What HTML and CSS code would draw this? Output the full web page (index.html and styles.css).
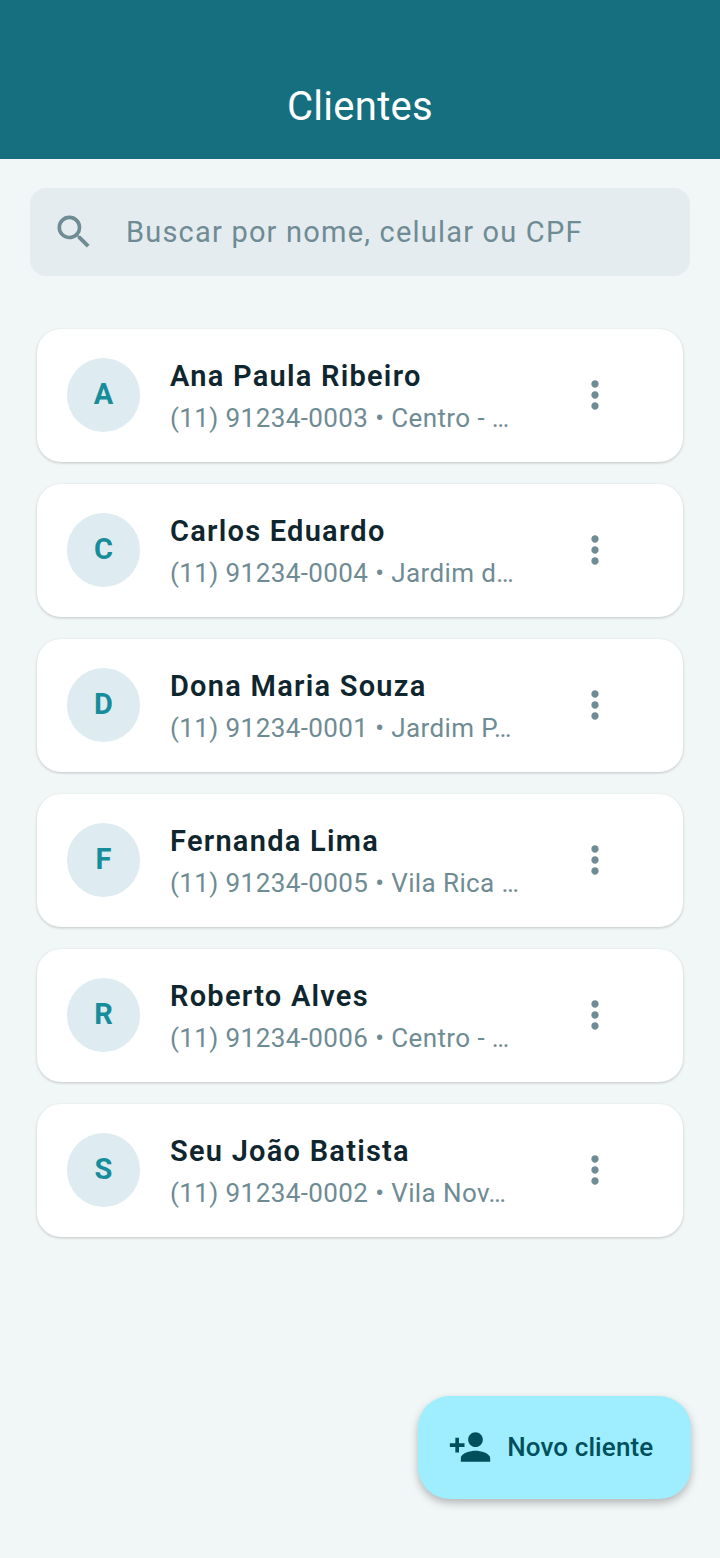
FILE: index.html
```html
<!DOCTYPE html>
<html lang="pt-BR">
<head>
    <meta charset="UTF-8">
    <meta name="viewport" content="width=device-width, initial-scale=1.0">
    <title>Clientes</title>
    <link rel="stylesheet" href="styles.css">
</head>
<body>
    <header class="app-bar">
        <h1 class="app-title">Clientes</h1>
    </header>

    <div class="search-box">
        <svg class="search-icon" viewBox="0 0 24 24"><path d="M15.5 14h-.79l-.28-.27A6.471 6.471 0 0 0 16 9.5 6.5 6.5 0 1 0 9.5 16c1.61 0 3.09-.59 4.23-1.57l.27.28v.79l5 4.99L20.49 19l-4.99-5zm-6 0C7.01 14 5 11.99 5 9.5S7.01 5 9.5 5 14 7.01 14 9.5 11.99 14 9.5 14z"/></svg>
        <span class="search-placeholder">Buscar por nome, celular ou CPF</span>
    </div>

    <main class="client-list">
        <div class="client-card">
            <div class="avatar">A</div>
            <div class="client-info">
                <div class="client-name">Ana Paula Ribeiro</div>
                <div class="client-sub">(11) 91234-0003 • Centro - …</div>
            </div>
            <svg class="more-icon" viewBox="0 0 24 24"><path d="M12 8c1.1 0 2-.9 2-2s-.9-2-2-2-2 .9-2 2 .9 2 2 2zm0 2c-1.1 0-2 .9-2 2s.9 2 2 2 2-.9 2-2-.9-2-2-2zm0 6c-1.1 0-2 .9-2 2s.9 2 2 2 2-.9 2-2-.9-2-2-2z"/></svg>
        </div>
        <div class="client-card">
            <div class="avatar">C</div>
            <div class="client-info">
                <div class="client-name">Carlos Eduardo</div>
                <div class="client-sub">(11) 91234-0004 • Jardim d…</div>
            </div>
            <svg class="more-icon" viewBox="0 0 24 24"><path d="M12 8c1.1 0 2-.9 2-2s-.9-2-2-2-2 .9-2 2 .9 2 2 2zm0 2c-1.1 0-2 .9-2 2s.9 2 2 2 2-.9 2-2-.9-2-2-2zm0 6c-1.1 0-2 .9-2 2s.9 2 2 2 2-.9 2-2-.9-2-2-2z"/></svg>
        </div>
        <div class="client-card">
            <div class="avatar">D</div>
            <div class="client-info">
                <div class="client-name">Dona Maria Souza</div>
                <div class="client-sub">(11) 91234-0001 • Jardim P…</div>
            </div>
            <svg class="more-icon" viewBox="0 0 24 24"><path d="M12 8c1.1 0 2-.9 2-2s-.9-2-2-2-2 .9-2 2 .9 2 2 2zm0 2c-1.1 0-2 .9-2 2s.9 2 2 2 2-.9 2-2-.9-2-2-2zm0 6c-1.1 0-2 .9-2 2s.9 2 2 2 2-.9 2-2-.9-2-2-2z"/></svg>
        </div>
        <div class="client-card">
            <div class="avatar">F</div>
            <div class="client-info">
                <div class="client-name">Fernanda Lima</div>
                <div class="client-sub">(11) 91234-0005 • Vila Rica …</div>
            </div>
            <svg class="more-icon" viewBox="0 0 24 24"><path d="M12 8c1.1 0 2-.9 2-2s-.9-2-2-2-2 .9-2 2 .9 2 2 2zm0 2c-1.1 0-2 .9-2 2s.9 2 2 2 2-.9 2-2-.9-2-2-2zm0 6c-1.1 0-2 .9-2 2s.9 2 2 2 2-.9 2-2-.9-2-2-2z"/></svg>
        </div>
        <div class="client-card">
            <div class="avatar">R</div>
            <div class="client-info">
                <div class="client-name">Roberto Alves</div>
                <div class="client-sub">(11) 91234-0006 • Centro - …</div>
            </div>
            <svg class="more-icon" viewBox="0 0 24 24"><path d="M12 8c1.1 0 2-.9 2-2s-.9-2-2-2-2 .9-2 2 .9 2 2 2zm0 2c-1.1 0-2 .9-2 2s.9 2 2 2 2-.9 2-2-.9-2-2-2zm0 6c-1.1 0-2 .9-2 2s.9 2 2 2 2-.9 2-2-.9-2-2-2z"/></svg>
        </div>
        <div class="client-card">
            <div class="avatar">S</div>
            <div class="client-info">
                <div class="client-name">Seu João Batista</div>
                <div class="client-sub">(11) 91234-0002 • Vila Nov…</div>
            </div>
            <svg class="more-icon" viewBox="0 0 24 24"><path d="M12 8c1.1 0 2-.9 2-2s-.9-2-2-2-2 .9-2 2 .9 2 2 2zm0 2c-1.1 0-2 .9-2 2s.9 2 2 2 2-.9 2-2-.9-2-2-2zm0 6c-1.1 0-2 .9-2 2s.9 2 2 2 2-.9 2-2-.9-2-2-2z"/></svg>
        </div>
    </main>

    <button class="fab">
        <svg class="fab-icon" viewBox="0 0 24 24"><path d="M15 12c2.21 0 4-1.79 4-4s-1.79-4-4-4-4 1.79-4 4 1.79 4 4 4zm-9-2V7H4v3H1v2h3v3h2v-3h3v-2H6zm9 4c-2.67 0-8 1.34-8 4v2h16v-2c0-2.66-5.33-4-8-4z"/></svg>
        Novo cliente
    </button>
</body>
</html>
```

FILE: styles.css
```css
body {
    margin: 0;
    min-height: 1558px;
    background-color: #f1f6f7;
    font-family: Roboto, Arial, sans-serif;
    box-sizing: border-box;
}
.app-bar {
    height: 159px;
    background-color: #166f7f;
    display: flex;
    justify-content: center;
    align-items: flex-end;
    padding-bottom: 30px;
    box-sizing: border-box;
}
.app-title {
    margin: 0;
    font-size: 40px;
    line-height: 44px;
    font-weight: 400;
    letter-spacing: 0.3px;
    color: #ffffff;
}
.search-box {
    display: flex;
    align-items: center;
    height: 88px;
    margin: 29px 30px 0;
    padding-left: 22px;
    background-color: #e4ecef;
    border-radius: 16px;
    box-sizing: border-box;
}
.search-icon {
    width: 44px;
    height: 44px;
    fill: #6f8b93;
    flex-shrink: 0;
}
.search-placeholder {
    margin-left: 30px;
    font-size: 29px;
    letter-spacing: 1.2px;
    color: #6f8b93;
}
.client-list {
    display: flex;
    flex-direction: column;
    gap: 22px;
    margin: 52.5px 37px 0;
}
.client-card {
    display: flex;
    align-items: center;
    height: 133px;
    padding-left: 29.7px;
    background-color: #ffffff;
    border-radius: 24px;
    box-shadow: 0 1px 3px rgba(0, 0, 0, 0.2);
    box-sizing: border-box;
}
.avatar {
    width: 73.5px;
    height: 73.5px;
    padding-bottom: 2px;
    border-radius: 50%;
    background-color: #deecf1;
    color: #178c9a;
    font-size: 29px;
    font-weight: 700;
    display: flex;
    justify-content: center;
    align-items: center;
    flex-shrink: 0;
    box-sizing: border-box;
}
.client-info {
    margin-left: 29.8px;
    width: 390px;
    padding-top: 2px;
}
.client-name {
    font-size: 29px;
    line-height: 38px;
    font-weight: 600;
    letter-spacing: 1.25px;
    color: #10262e;
    white-space: nowrap;
}
.client-sub {
    margin-top: 5px;
    font-size: 26px;
    line-height: 36px;
    letter-spacing: 0.4px;
    color: #6f8b93;
    white-space: nowrap;
}
.more-icon {
    width: 44px;
    height: 44px;
    margin-left: 13px;
    fill: #6f8b93;
    flex-shrink: 0;
}
.fab {
    position: absolute;
    left: 418.3px;
    top: 1395.7px;
    width: 272.4px;
    height: 103px;
    display: flex;
    align-items: center;
    padding: 0 0 0 30px;
    border: none;
    border-radius: 32px;
    background-color: #9feeff;
    color: #004f5c;
    font-family: Roboto, Arial, sans-serif;
    font-size: 26px;
    font-weight: 500;
    letter-spacing: 0.1px;
    box-shadow: 0 4px 8px rgba(0, 0, 0, 0.26);
    box-sizing: border-box;
}
.fab-icon {
    width: 44px;
    height: 44px;
    fill: #004f5c;
    margin-right: 15px;
}
```
